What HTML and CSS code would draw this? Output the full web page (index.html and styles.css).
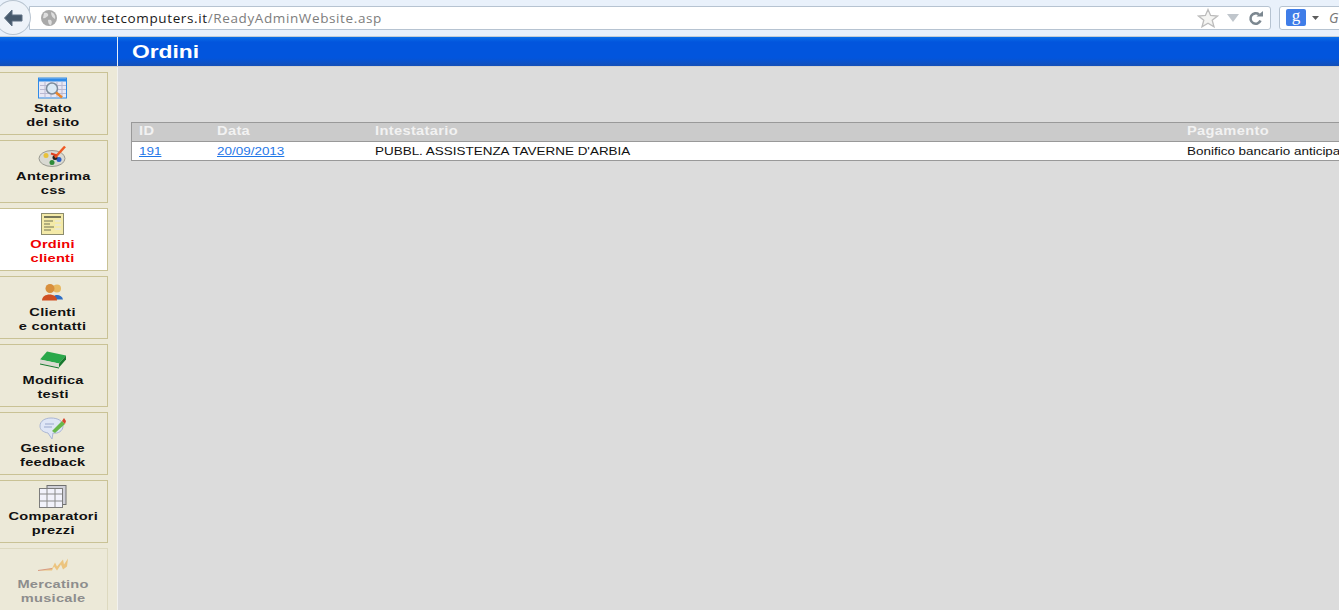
FILE: index.html
```html
<!doctype html>

<html>

<head>
    <meta charset='utf-8'>
    <title>Ordini</title>
    <link rel="stylesheet" href="styles.css">
</head>

<body>
    <div class="toolbar">
        <div class="backBtn">
            <svg width="22" height="20" viewBox="0 0 22 20">
                <path d="M10 2 L2.5 10 L10 18 L10 13 L20 13 L20 7 L10 7 Z" fill="#46596c" stroke="#5f7183" stroke-width="1"/>
            </svg>
        </div>
        <div class="urlBar">
            <svg class="globe" width="18" height="18" viewBox="0 0 18 18">
                <circle cx="9" cy="9" r="8" fill="#a9a9a9"/>
                <path d="M4 4 C7 3 9 5 8 7 C6 8 5 10 3 9 Z M11 3 C14 4 16 7 15 10 C13 9 11 7 11 3 Z M8 11 C11 10 13 12 11 16 C9 16 8 14 8 11 Z" fill="#dedede"/>
            </svg>
            <span class="url"><span class="urlDim">www.</span>tetcomputers.it<span class="urlDim">/ReadyAdminWebsite.asp</span></span>
            <svg class="star" width="22" height="20" viewBox="0 0 22 20">
                <path d="M11 1.5 L13.6 7.5 L20.5 8 L15.2 12.2 L17 18.8 L11 15.2 L5 18.8 L6.8 12.2 L1.5 8 L8.4 7.5 Z" fill="#f4f4f2" stroke="#bcbcbc" stroke-width="1.3"/>
            </svg>
            <svg class="drop" width="12" height="8" viewBox="0 0 12 8">
                <path d="M0 0 L12 0 L6 8 Z" fill="#c0c6cc"/>
            </svg>
            <svg class="reload" width="16" height="16" viewBox="0 0 16 16">
                <path d="M12.5 10.5 A5.2 5.2 0 1 1 11 4.5" fill="none" stroke="#7b8790" stroke-width="2.6"/>
                <path d="M8.5 6.5 L15 6.5 L15 1 Z" fill="#7b8790"/>
            </svg>
        </div>
        <div class="searchBar">
            <span class="gLogo">g</span>
            <svg class="gDrop" width="7" height="4" viewBox="0 0 7 4">
                <path d="M0 0 L7 0 L3.5 4 Z" fill="#5c5c5c"/>
            </svg>
            <span class="gText">G</span>
        </div>
    </div>

    <div class="topBar">
        <div class="topLeft"></div>
        <h1><span>Ordini</span></h1>
    </div>

    <div class="main">
        <div class="sidebar">
            <a class="item">
                <svg width="30" height="22" viewBox="0 0 30 22">
                    <rect x="0.5" y="0.5" width="28" height="20" fill="#e8e8f4" stroke="#2f8be8"/>
                    <rect x="1" y="1" width="27" height="3" fill="#2f8be8"/>
                    <path d="M2 8 H28 M2 12 H28 M2 16 H28 M7 4 V20 M13 4 V20 M19 4 V20 M24 4 V20" stroke="#b9b9d2"/>
                    <circle cx="14" cy="11" r="5.5" fill="#dbeaf5" stroke="#7d8c9c" stroke-width="1.5"/>
                    <path d="M18 15 L24 20" stroke="#e8852a" stroke-width="2.5"/>
                </svg>
                <span>Stato<br>del sito</span>
            </a>
            <a class="item">
                <svg width="30" height="22" viewBox="0 0 30 22">
                    <ellipse cx="14" cy="13" rx="13" ry="8" fill="#d9d9d2" stroke="#9a9a90"/>
                    <circle cx="8" cy="10" r="2.5" fill="#e8c23a"/>
                    <circle cx="14" cy="17" r="2.5" fill="#2e8b3a"/>
                    <circle cx="21" cy="14" r="2.5" fill="#2c5fc4"/>
                    <circle cx="17" cy="12" r="2.5" fill="#222"/>
                    <path d="M17 12 L27 1" stroke="#ef5a24" stroke-width="2.5"/>
                    <path d="M13 8 L19 10" stroke="#e04020" stroke-width="2"/>
                </svg>
                <span>Anteprima<br>css</span>
            </a>
            <a class="item active">
                <svg width="24" height="23" viewBox="0 0 24 23">
                    <rect x="0.5" y="0.5" width="22" height="21" fill="#f4eaa8" stroke="#8c8c6e"/>
                    <path d="M3 4 H20" stroke="#77775a" stroke-width="2"/>
                    <path d="M3 8 H12 M3 11 H9 M3 14 H13 M3 17 H10" stroke="#9c9a70" stroke-width="1.5"/>
                    <path d="M14 8 H20 M14 12 H20 M14 16 H20" stroke="#e6e6da" stroke-width="1.5"/>
                </svg>
                <span>Ordini<br>clienti</span>
            </a>
            <a class="item">
                <svg width="24" height="20" viewBox="0 0 24 20">
                    <circle cx="16" cy="6" r="4" fill="#e8b860"/>
                    <path d="M11 17 C11 11 21 11 22 17 Z" fill="#2f6ec4"/>
                    <circle cx="9" cy="6" r="4.5" fill="#d88f3c"/>
                    <path d="M1 18 C1 10 16 10 16 18 Z" fill="#cf4f22"/>
                </svg>
                <span>Clienti<br>e contatti</span>
            </a>
            <a class="item">
                <svg width="29" height="20" viewBox="0 0 29 20">
                    <path d="M8 1 L27 5 L20 13 L1 9 Z" fill="#2aa84a"/>
                    <path d="M1 9 L20 13 L20 17 L1 13 Z" fill="#dadad0"/>
                    <path d="M20 13 L27 5 L27 9 L20 17 Z" fill="#17782f"/>
                    <path d="M1 13 L20 17 L20 18 L1 14 Z" fill="#17782f"/>
                </svg>
                <span>Modifica<br>testi</span>
            </a>
            <a class="item">
                <svg width="28" height="23" viewBox="0 0 28 23">
                    <path d="M12 1 C19 1 24 4 24 9 C24 14 19 17 14 16 L13 22 L9 16 C4 15 1 13 1 9 C1 4 6 1 12 1 Z" fill="#dfe6f6" stroke="#aab6d4"/>
                    <path d="M6 7 H15 M5 10 H13" stroke="#9aa8cc"/>
                    <path d="M13 14 L23 4 L26 7 L16 16 Z" fill="#69b84a"/>
                    <path d="M23 4 L25 1 L27 4 L26 7 Z" fill="#d8452e"/>
                </svg>
                <span>Gestione<br>feedback</span>
            </a>
            <a class="item">
                <svg width="28" height="23" viewBox="0 0 28 23">
                    <rect x="8" y="0.5" width="19" height="19" fill="#d0d0d8" stroke="#707070"/>
                    <rect x="0.5" y="3.5" width="23" height="19" fill="#f2f2fb" stroke="#7c7c7c"/>
                    <path d="M8 4 V22 M16 4 V22 M1 9 H23 M1 16 H23" stroke="#8a8a8a"/>
                </svg>
                <span>Comparatori<br>prezzi</span>
            </a>
            <a class="item disabled">
                <svg width="32" height="16" viewBox="0 0 32 16">
                    <path d="M1 14 C8 13 12 13 15 12 L18 6 L20 10 L26 3 L27 8 L31 2 L30 10 L26 13 L24 8 L20 14 L17 10 L15 14 Z" fill="#ecc47e"/>
                    <path d="M1 14 L15 12" stroke="#d89a80"/>
                </svg>
                <span>Mercatino<br>musicale</span>
            </a>
        </div>

        <div class="content">
            <table class="orders">
                <tr>
                    <th class="colId"><span>ID</span></th>
                    <th class="colData"><span>Data</span></th>
                    <th class="colName"><span>Intestatario</span></th>
                    <th class="colPay"><span>Pagamento</span></th>
                </tr>
                <tr>
                    <td><span><a href="#">191</a></span></td>
                    <td><span><a href="#">20/09/2013</a></span></td>
                    <td><span>PUBBL. ASSISTENZA TAVERNE D'ARBIA</span></td>
                    <td><span>Bonifico bancario anticipato</span></td>
                </tr>
            </table>
        </div>
    </div>
</body>

</html>
```

FILE: styles.css
```css
html, body {
    margin: 0;
    height: 610px;
    overflow: hidden;
}

body {
    font-family: "Liberation Sans", Arial, sans-serif;
    background-color: #dcdcdc;
}

.toolbar {
    display: flex;
    align-items: center;
    height: 35px;
    padding: 0 0 1px 0;
    background-color: #e9f1fb;
    border-bottom: 1px solid #c3cdd6;
    box-sizing: content-box;
}

.backBtn {
    display: flex;
    align-items: center;
    justify-content: center;
    flex: none;
    width: 34px;
    height: 33px;
    margin-left: -5px;
    margin-right: 0;
    border: 1px solid #b8c4d0;
    border-radius: 50%;
    background-color: #eef3f9;
    position: relative;
}

.urlBar {
    display: flex;
    align-items: center;
    flex: none;
    width: 1242px;
    height: 24px;
    margin-left: -2px;
    padding-left: 10px;
    box-sizing: border-box;
    background-color: #fff;
    border: 1px solid #b6c3d1;
    border-radius: 0 3px 3px 0;
}

.globe {
    flex: none;
    margin-right: 6px;
}

.url {
    font-family: "Open Sans", sans-serif;
    font-size: 13.5px;
    color: #1a1a1a;
    letter-spacing: 0.62px;
    flex: 1;
}

.urlDim {
    color: #7d7d7d;
}

.star {
    flex: none;
    margin-right: 8px;
}

.drop {
    flex: none;
    margin-right: 9px;
}

.reload {
    flex: none;
    margin-right: 6px;
}

.searchBar {
    display: flex;
    align-items: center;
    flex: none;
    width: 70px;
    height: 24px;
    margin-left: 8px;
    padding-left: 6px;
    box-sizing: border-box;
    background-color: #fff;
    border: 1px solid #b6c3d1;
    border-radius: 3px 0 0 3px;
}

.gLogo {
    display: block;
    width: 20px;
    height: 17px;
    background-color: #3f7de8;
    border-radius: 2px;
    color: #fff;
    font-family: "Liberation Serif", serif;
    font-size: 17px;
    line-height: 13px;
    text-align: center;
}

.gDrop {
    margin-left: 6px;
}

.gText {
    margin-left: 10px;
    font-family: "Open Sans", sans-serif;
    font-style: italic;
    font-size: 14px;
    color: #777;
}

.topBar {
    display: flex;
    height: 29px;
    background: linear-gradient(#0a6fe8 0, #0255dd 5px, #0255dd 21px, #1450b8 29px);
    border-bottom: 1px solid #d2d2d2;
}

.topLeft {
    width: 117px;
    border-right: 1px solid #e6eefa;
}

h1 {
    margin: 0;
    padding-left: 14px;
    font-size: 19px;
    line-height: 29px;
    font-weight: bold;
    color: #fff;
}

/* the capture is stretched sideways, so the text is too */
h1 span {
    display: inline-block;
    transform: scaleX(1.2);
    transform-origin: left center;
}

.main {
    display: flex;
    height: 543px;
}

.sidebar {
    display: flex;
    flex-direction: column;
    flex: none;
    gap: 5px;
    width: 117px;
    padding-top: 5px;
    background-color: #ece9d8;
    border-right: 1px solid #f2f2ee;
    box-sizing: content-box;
    overflow: hidden;
}

.item {
    display: flex;
    flex-direction: column;
    align-items: center;
    flex: none;
    width: 110px;
    height: 63px;
    margin-left: -2px;
    padding-top: 4px;
    box-sizing: border-box;
    border: 1px solid #c9c295;
    font-size: 11.5px;
    line-height: 14px;
    font-weight: bold;
    text-align: center;
    color: #111;
}

.item svg {
    height: 23px;
    flex: none;
}

.item span {
    display: block;
    margin-top: 1px;
    letter-spacing: 0.2px;
    white-space: nowrap;
    transform: scaleX(1.27);
}

.item.active {
    background-color: #fff;
    color: #f00000;
}

.item.disabled {
    color: #8d8d8d;
    border-color: #ddd9bf;
}

.content {
    flex: 1;
    min-width: 0;
    padding: 55px 0 0 13px;
    overflow: hidden;
}

.orders {
    width: 1250px;
    table-layout: fixed;
    border-collapse: collapse;
    font-size: 11.5px;
    background-color: #fff;
    border: 1px solid #999;
}

.orders span {
    display: inline-block;
    transform: scaleX(1.17);
    transform-origin: left center;
    white-space: nowrap;
}

.orders th {
    height: 19px;
    padding: 0 0 2px 7px;
    background-color: #cbcbcb;
    border-bottom: 1px solid #999;
    color: #f2f2f2;
    font-size: 12.5px;
    font-weight: bold;
    text-align: left;
    letter-spacing: 0.3px;
    box-sizing: border-box;
}

.orders td {
    height: 18px;
    padding: 0 0 0 7px;
    border-bottom: 1px dotted #bbb;
    color: #111;
    white-space: nowrap;
    overflow: hidden;
}

.orders a {
    color: #1f77e8;
}

.colId {
    width: 78px;
}

.colData {
    width: 158px;
}

.colName {
    width: 812px;
}
```
